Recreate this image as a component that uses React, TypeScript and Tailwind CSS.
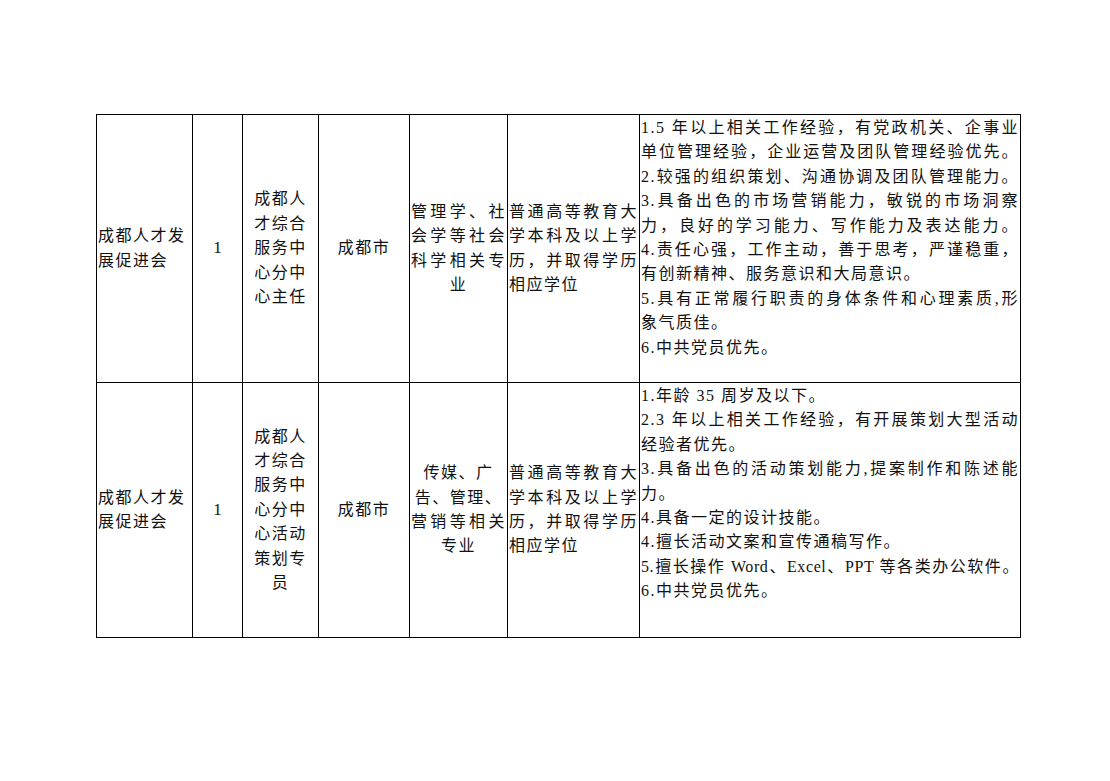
const font = { fontFamily: '"Liberation Serif", "Noto Sans CJK SC", serif' }

type Line = { t: string; j?: boolean; tight?: boolean }

const rows: {
  h: string
  unit: string[]
  count: string
  post: string[]
  place: string
  major: Line[]
  edu: Line[]
  req: Line[]
}[] = [
  {
    h: "h-[268px]",
    unit: ["成都人才发", "展促进会"],
    count: "1",
    post: ["成都人", "才综合", "服务中", "心分中", "心主任"],
    place: "成都市",
    major: [
      { t: "管理学、社", j: true },
      { t: "会学等社会", j: true },
      { t: "科学相关专", j: true },
      { t: "业" },
    ],
    edu: [
      { t: "普通高等教育大", j: true },
      { t: "学本科及以上学", j: true },
      { t: "历，并取得学历", j: true },
      { t: "相应学位" },
    ],
    req: [
      { t: "1.5 年以上相关工作经验，有党政机关、企事业", j: true },
      { t: "单位管理经验，企业运营及团队管理经验优先。", j: true },
      { t: "2.较强的组织策划、沟通协调及团队管理能力。", j: true },
      { t: "3.具备出色的市场营销能力，敏锐的市场洞察", j: true },
      { t: "力，良好的学习能力、写作能力及表达能力。", j: true },
      { t: "4.责任心强，工作主动，善于思考，严谨稳重，", j: true },
      { t: "有创新精神、服务意识和大局意识。" },
      { t: "5.具有正常履行职责的身体条件和心理素质,形", j: true },
      { t: "象气质佳。" },
      { t: "6.中共党员优先。" },
    ],
  },
  {
    h: "h-[255px]",
    unit: ["成都人才发", "展促进会"],
    count: "1",
    post: ["成都人", "才综合", "服务中", "心分中", "心活动", "策划专", "员"],
    place: "成都市",
    major: [
      { t: "传媒、广" },
      { t: "告、管理、" },
      { t: "营销等相关", j: true },
      { t: "专业" },
    ],
    edu: [
      { t: "普通高等教育大", j: true },
      { t: "学本科及以上学", j: true },
      { t: "历，并取得学历", j: true },
      { t: "相应学位" },
    ],
    req: [
      { t: "1.年龄 35 周岁及以下。" },
      { t: "2.3 年以上相关工作经验，有开展策划大型活动", j: true },
      { t: "经验者优先。" },
      { t: "3.具备出色的活动策划能力,提案制作和陈述能", j: true },
      { t: "力。" },
      { t: "4.具备一定的设计技能。" },
      { t: "4.擅长活动文案和宣传通稿写作。" },
      { t: "5.擅长操作 Word、Excel、PPT 等各类办公软件。", j: true, tight: true },
      { t: "6.中共党员优先。" },
    ],
  },
]

function Lines({ lines, align }: { lines: Line[]; align: string }) {
  return (
    <>
      {lines.map((l, i) => (
        <div
          key={i}
          className={
            (l.j
              ? "whitespace-nowrap text-justify [text-align-last:justify]"
              : "whitespace-nowrap " + align) + (l.tight ? " tracking-[0.6px]" : "")
          }
        >
          {l.t}
        </div>
      ))}
    </>
  )
}

export default function App() {
  return (
    <div className="min-h-[781px] w-[1110px] bg-white pt-[114px] pl-[96px]" style={font}>
      <table className="w-[924px] table-fixed border-collapse text-[16px] leading-[24.4px] tracking-[1.5px] text-[#111]">
        <colgroup>
          <col className="w-[96px]" />
          <col className="w-[50px]" />
          <col className="w-[76px]" />
          <col className="w-[91px]" />
          <col className="w-[98px]" />
          <col className="w-[132px]" />
          <col className="w-[381px]" />
        </colgroup>
        <tbody>
          {rows.map((r, i) => (
            <tr key={i} className={r.h}>
              <td className="border border-black px-[1px] align-middle">
                {r.unit.map((u) => (
                  <div key={u} className="whitespace-nowrap">
                    {u}
                  </div>
                ))}
              </td>
              <td className="border border-black text-center align-middle text-[17px] tracking-normal">
                {r.count}
              </td>
              <td className="border border-black text-center align-middle">
                {r.post.map((p, k) => (
                  <div key={k}>{p}</div>
                ))}
              </td>
              <td className="border border-black text-center align-middle">{r.place}</td>
              <td className="border border-black px-[1px] align-middle">
                <Lines lines={r.major} align="text-center" />
              </td>
              <td className="border border-black px-[1px] align-middle">
                <Lines lines={r.edu} align="text-left" />
              </td>
              <td className="overflow-hidden border border-black px-[1px] pt-[1px] align-top">
                <Lines lines={r.req} align="text-left" />
              </td>
            </tr>
          ))}
        </tbody>
      </table>
    </div>
  )
}
